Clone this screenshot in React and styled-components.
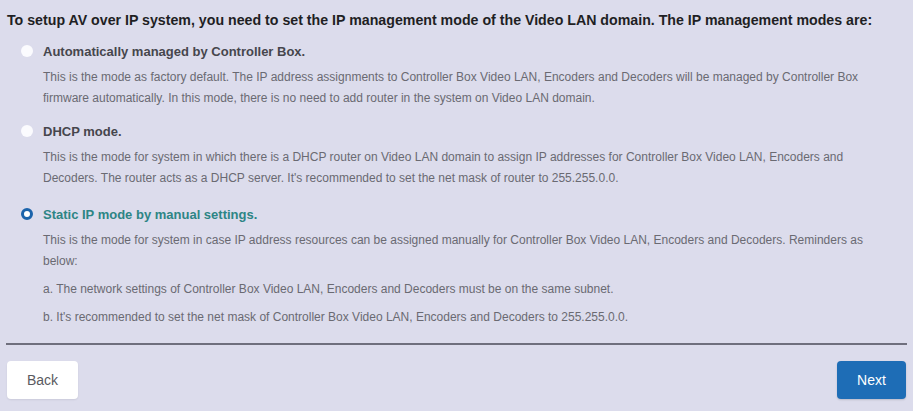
import React, { useState } from "react";
import styled, { createGlobalStyle } from "styled-components";

const Global = createGlobalStyle`
  html, body { margin: 0; padding: 0; background: #dcdcec; }
  body { font-family: "Liberation Sans", Arial, sans-serif; }
  * { box-sizing: border-box; }
`;

const Page = styled.div`
  width: 913px;
  height: 411px;
  padding: 10px 6px 0 6px;
  background: #dcdcec;
  display: flex;
  flex-direction: column;
`;

const Heading = styled.div`
  font-size: 14.2px;
  font-weight: bold;
  line-height: 20px;
  color: #1f1f24;
  padding-left: 1px;
  white-space: nowrap;
`;

const OptionList = styled.div`
  display: flex;
  flex-direction: column;
  margin-top: 11px;
`;

const Option = styled.div`
  display: flex;
  flex-direction: column;
  margin-top: ${(p) => p.$gap}px;
`;

const TitleRow = styled.label`
  display: flex;
  align-items: center;
  height: 20px;
  padding-left: 15px;
  cursor: pointer;
`;

const Radio = styled.span`
  width: 12px;
  height: 12px;
  border-radius: 50%;
  flex: none;
  margin-right: 10px;
  background: ${(p) => (p.$checked ? "#ffffff" : "#fbfbfe")};
  border: ${(p) => (p.$checked ? "3.5px solid #1b63ab" : "none")};
`;

const Title = styled.span`
  font-size: 13px;
  font-weight: bold;
  color: ${(p) => (p.$checked ? "#2d8585" : "#46464c")};
`;

const Desc = styled.p`
  margin: ${(p) => p.$gap}px 0 0 37px;
  font-size: 12px;
  line-height: 21px;
  color: #6a6a72;
  padding-right: 20px;
`;

const Divider = styled.hr`
  margin: 15px 0 0 0;
  border: none;
  height: 2px;
  background: #6f6f7d;
  width: 901px;
`;

const Footer = styled.div`
  display: flex;
  justify-content: space-between;
  padding: 16px 1px 0 1px;
  width: 901px;
`;

const Button = styled.button`
  height: 38px;
  width: ${(p) => p.$w}px;
  border-radius: 4px;
  border: none;
  font-family: "Liberation Sans", Arial, sans-serif;
  font-size: 14px;
  cursor: pointer;
  background: ${(p) => (p.$primary ? "#1e6db6" : "#ffffff")};
  color: ${(p) => (p.$primary ? "#ffffff" : "#5a5a60")};
  box-shadow: ${(p) => (p.$primary ? "0 1px 2px rgba(0,0,0,0.15)" : "0 1px 2px rgba(0,0,0,0.08)")};
`;

const options = [
  {
    gap: 0,
    title: "Automatically managed by Controller Box.",
    paras: [
      "This is the mode as factory default. The IP address assignments to Controller Box Video LAN, Encoders and Decoders will be managed by Controller Box firmware automatically. In this mode, there is no need to add router in the system on Video LAN domain.",
    ],
  },
  {
    gap: 12,
    title: "DHCP mode.",
    paras: [
      "This is the mode for system in which there is a DHCP router on Video LAN domain to assign IP addresses for Controller Box Video LAN, Encoders and Decoders. The router acts as a DHCP server. It's recommended to set the net mask of router to 255.255.0.0.",
    ],
  },
  {
    gap: 15,
    title: "Static IP mode by manual settings.",
    paras: [
      "This is the mode for system in case IP address resources can be assigned manually for Controller Box Video LAN, Encoders and Decoders. Reminders as below:",
      "a. The network settings of Controller Box Video LAN, Encoders and Decoders must be on the same subnet.",
      "b. It's recommended to set the net mask of Controller Box Video LAN, Encoders and Decoders to 255.255.0.0.",
    ],
  },
];

export default function App() {
  const [sel, setSel] = useState(2);
  return (
    <Page>
      <Global />
      <Heading>
        To setup AV over IP system, you need to set the IP management mode of the Video LAN domain. The IP management modes are:
      </Heading>
      <OptionList>
        {options.map((o, i) => (
          <Option key={i} $gap={o.gap}>
            <TitleRow onClick={() => setSel(i)}>
              <Radio $checked={sel === i} />
              <Title $checked={sel === i}>{o.title}</Title>
            </TitleRow>
            {o.paras.map((p, j) => (
              <Desc key={j} $gap={j > 0 ? 7 : 6}>
                {p}
              </Desc>
            ))}
          </Option>
        ))}
      </OptionList>
      <Divider />
      <Footer>
        <Button $w={71}>Back</Button>
        <Button $w={69} $primary>
          Next
        </Button>
      </Footer>
    </Page>
  );
}
